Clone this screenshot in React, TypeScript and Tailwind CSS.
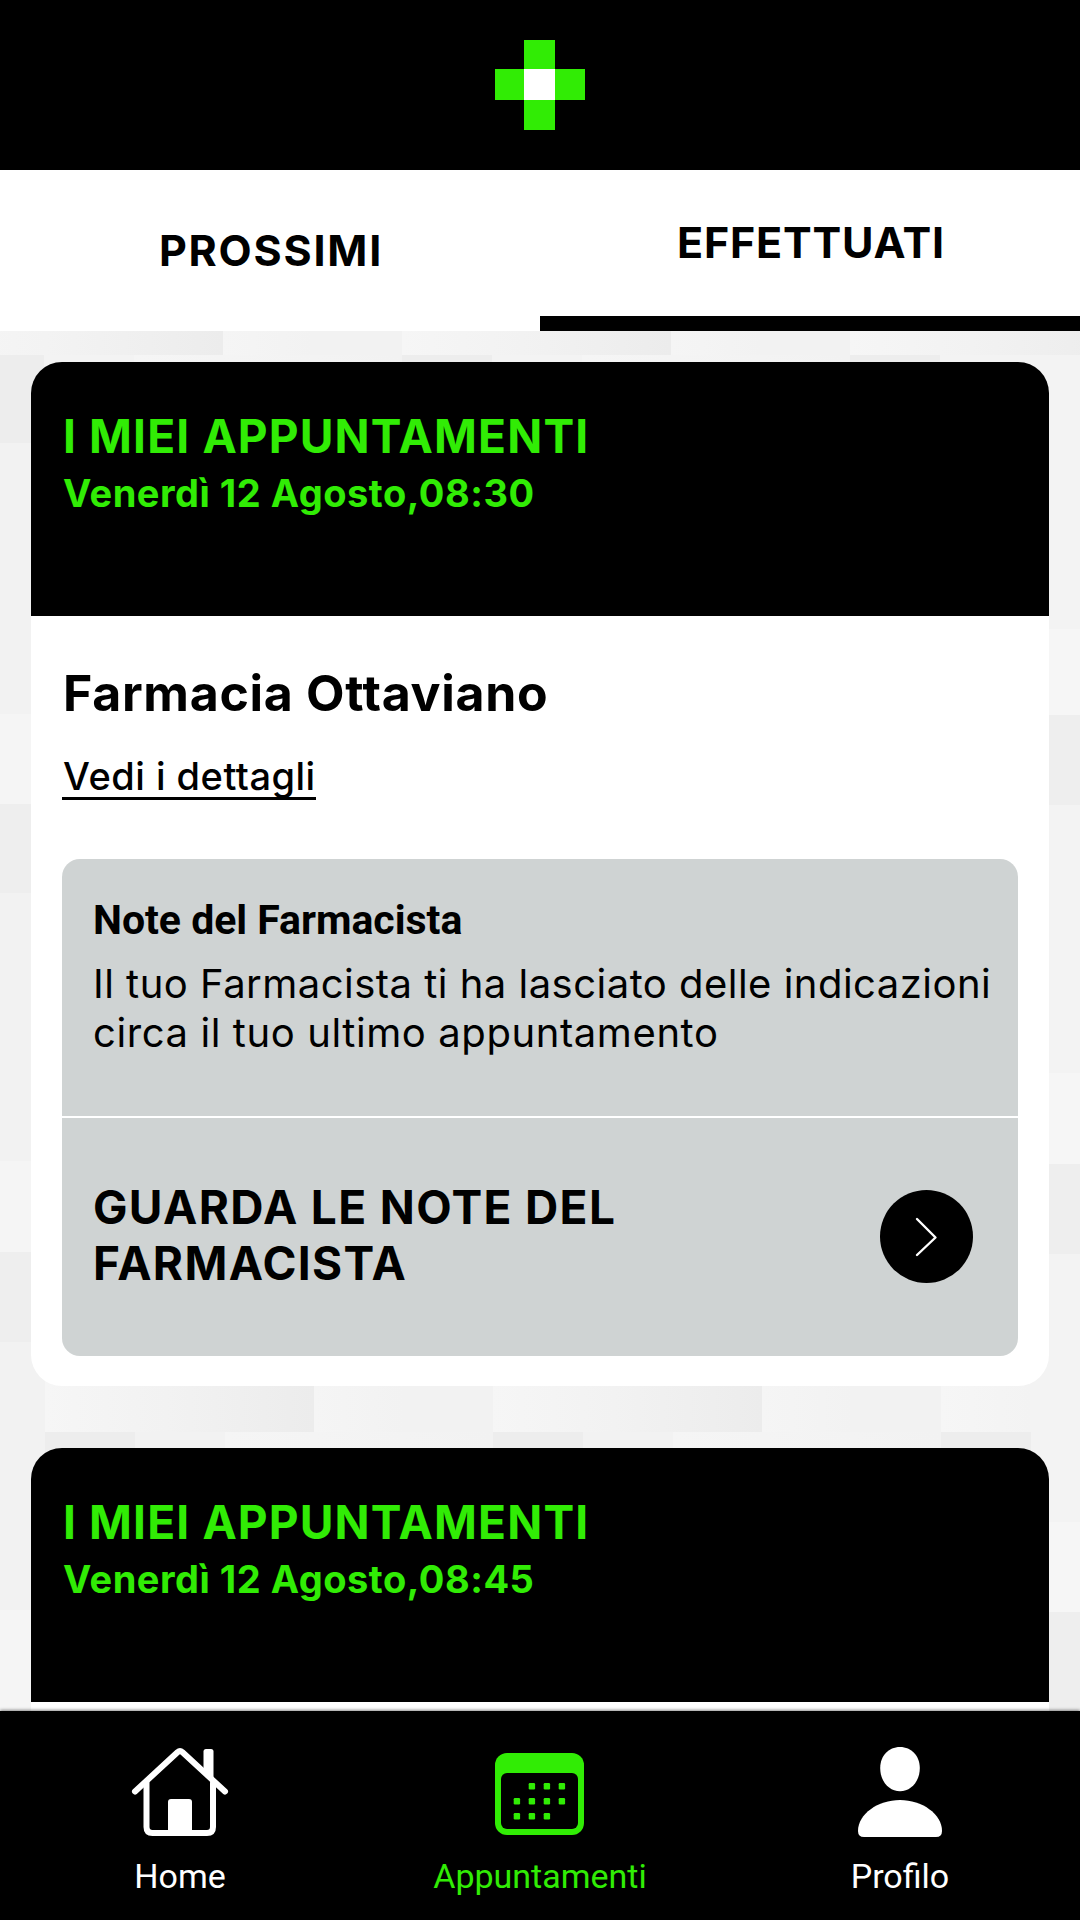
type Appointment = { date: string; pharmacy?: string };

const appointments: Appointment[] = [
  { date: "Venerdì 12 Agosto,08:30", pharmacy: "Farmacia Ottaviano" },
  { date: "Venerdì 12 Agosto,08:45" },
];

function Logo() {
  return (
    <svg width="90" height="90" viewBox="0 0 90 90" shapeRendering="crispEdges">
      <path d="M29 0h31v90H29zM0 29h90v31H0z" fill="#31ec05" />
      <path d="M29 29h31v31H29z" fill="#fff" />
    </svg>
  );
}

function Mosaic() {
  return (
    <svg className="absolute inset-0 h-full w-full" aria-hidden="true">
      <defs>
        <linearGradient id="fade">
          <stop offset="0" stopColor="#f6f6f6" />
          <stop offset="0.45" stopColor="#f2f2f2" />
          <stop offset="1" stopColor="#ececec" />
        </linearGradient>
        <linearGradient id="soft">
          <stop offset="0" stopColor="#f5f5f5" />
          <stop offset="1" stopColor="#f2f2f2" />
        </linearGradient>
      </defs>
      {[-46, 402, 850].map((x) => (
        <g key={x}>
          <rect x={x} y="0" width="269" height="24" fill="url(#fade)" />
          <rect x={x + 269} y="0" width="90" height="24" fill="url(#soft)" />
          <rect x={x + 359} y="0" width="89" height="24" fill="#f2f2f2" />
          <rect x={x} y="24" width="90" height="88" fill="#ededed" />
          <rect x={x + 90} y="24" width="90" height="88" fill="#f3f3f3" />
          <rect x={x + 180} y="24" width="268" height="88" fill="url(#soft)" />
        </g>
      ))}
      <rect x="0" y="112" width="31" height="271" fill="#f2f2f2" />
      <rect x="0" y="383" width="31" height="90" fill="#f5f5f5" />
      <rect x="0" y="473" width="31" height="89" fill="#eeeeee" />
      <rect x="0" y="562" width="31" height="268" fill="#f2f2f2" />
      <rect x="0" y="830" width="31" height="91" fill="#f5f5f5" />
      <rect x="0" y="921" width="31" height="90" fill="#eeeeee" />
      <rect x="0" y="1011" width="60" height="268" fill="#f2f2f2" />
      <rect x="0" y="1279" width="31" height="101" fill="#f5f5f5" />
      <rect x="1000" y="24" width="80" height="274" fill="#f3f3f3" />
      <rect x="1000" y="298" width="80" height="86" fill="#f6f6f6" />
      <rect x="1000" y="384" width="80" height="90" fill="#eeeeee" />
      <rect x="1000" y="474" width="80" height="268" fill="#f3f3f3" />
      <rect x="1000" y="742" width="80" height="91" fill="#f6f6f6" />
      <rect x="1000" y="833" width="80" height="90" fill="#eeeeee" />
      <rect x="1000" y="923" width="80" height="268" fill="#f3f3f3" />
      <rect x="1000" y="1191" width="80" height="90" fill="#f6f6f6" />
      <rect x="1000" y="1281" width="80" height="99" fill="#eeeeee" />
      {[45, 493, 941].map((x) => (
        <g key={x}>
          <rect x={x} y="1011" width="269" height="90" fill="url(#fade)" />
          <rect x={x + 269} y="1011" width="90" height="90" fill="url(#soft)" />
          <rect x={x + 359} y="1011" width="89" height="90" fill="#f2f2f2" />
          <rect x={x} y="1101" width="90" height="30" fill="#ededed" />
          <rect x={x + 90} y="1101" width="90" height="30" fill="#f2f2f2" />
          <rect x={x + 180} y="1101" width="268" height="30" fill="url(#soft)" />
        </g>
      ))}
      <rect x="1031" y="923" width="49" height="268" fill="#f3f3f3" />
    </svg>
  );
}

function AppointmentCard({ date, pharmacy }: Appointment) {
  return (
    <article className="shrink-0 overflow-hidden rounded-[31px] bg-white">
      <header className="h-[254px] bg-black px-8 pt-[47px] font-bold text-[#31ec05]">
        <h2 className="text-[46px] leading-[55px] tracking-[1.15px]">I MIEI APPUNTAMENTI</h2>
        <p className="text-[38px] leading-[59px] tracking-[0.51px]">{date}</p>
      </header>
      {pharmacy ? (
        <div className="flex flex-col items-start px-[31px] pt-[47px] pb-[30px]">
          <h3 className="pl-px text-[50px] leading-[60px] font-bold tracking-[0.69px]">{pharmacy}</h3>
          <a className="mt-[33px] border-b-3 border-black pl-px text-[38px] leading-[41px] font-medium tracking-[0.5px]">
            Vedi i dettagli
          </a>
          <section className="mt-[59px] w-full overflow-hidden rounded-[18px] bg-[#cfd3d3]">
            <div className="h-[259px] border-b-2 border-white pt-9 pl-[31px]">
              <h4 className="font-[Roboto,sans-serif] text-[41px] leading-[50px] font-bold tracking-[-0.03px]">Note del Farmacista</h4>
              <p className="mt-3.5 text-[40px] leading-[49px] tracking-[0.48px] whitespace-nowrap">
                Il tuo Farmacista ti ha lasciato delle indicazioni
                <br />
                <span className="tracking-[0.59px]">circa il tuo ultimo appuntamento</span>
              </p>
            </div>
            <button className="flex h-[238px] w-full items-center justify-between pr-[45px] pb-0.5 pl-[31px] text-left">
              <span className="mb-0.5 w-[600px] text-[46px] leading-[56px] font-bold tracking-[1.35px]">
                GUARDA LE NOTE DEL FARMACISTA
              </span>
              <span className="flex size-[93px] items-center justify-center rounded-full bg-black">
                <svg width="93" height="93" viewBox="0 0 93 93" fill="none" stroke="#fff" strokeWidth="2.4" strokeLinecap="round" strokeLinejoin="round">
                  <path d="M37 29L55.500 47.500L37 65" />
                </svg>
              </span>
            </button>
          </section>
        </div>
      ) : (
        <div className="h-[771px]" />
      )}
    </article>
  );
}

function HomeIcon() {
  return (
    <svg width="100" height="90" viewBox="0 0 100 90" fill="none" stroke="#fff" strokeWidth="6" strokeLinecap="round" strokeLinejoin="round">
      <path d="M5 44.500L47.500 5.200Q50 3 52.500 5.200L95 44.500" />
      <path d="M16.500 36V80Q16.500 86 22.500 86H77Q83 86 83 80V36" />
      <path d="M73.500 22V4.500Q73.500 2 76 2H81Q83.500 2 83.500 4.500V31.500Z" fill="#fff" stroke="none" />
      <path d="M38 88V55Q38 52 41 52H59Q62 52 62 55V88Z" fill="#fff" stroke="none" />
    </svg>
  );
}

const calendarDots = [
  [34, 30], [49, 30], [64, 30],
  [19, 45], [34, 45], [49, 45], [64, 45],
  [19, 60], [34, 60], [49, 60],
];

function CalendarIcon() {
  return (
    <svg className="mr-px mb-0.5" width="89" height="82" viewBox="0 0 89 82">
      <rect width="89" height="82" rx="12" fill="#31ec05" />
      <rect x="6" y="20" width="77" height="56" rx="6" fill="#000" />
      {calendarDots.map(([x, y]) => (
        <rect key={`${x}-${y}`} x={x - 0.3} y={y} width="6.400" height="6.400" rx="1.200" fill="#31ec05" />
      ))}
    </svg>
  );
}

function ProfileIcon() {
  return (
    <svg width="86" height="90" viewBox="0 0 86 90" fill="#fff">
      <path d="M43 0C54.500 0 62.800 9 62.800 21C62.800 34.500 54 44.200 43 44.200S23.200 34.500 23.200 21C23.200 9 31.500 0 43 0Z" />
      <path d="M43 53C65 53 85 67 85 84Q85 90 79 90H7Q1 90 1 84C1 67 21 53 43 53Z" />
    </svg>
  );
}

const navItems = [
  { label: "Home", icon: HomeIcon, color: "text-white" },
  { label: "Appuntamenti", icon: CalendarIcon, color: "text-[#31ec05]" },
  { label: "Profilo", icon: ProfileIcon, color: "text-white" },
];

export default function App() {
  return (
    <div className="flex h-[1920px] w-[1080px] flex-col overflow-hidden bg-[#f3f3f3] font-[Inter,sans-serif] text-black">
      <header className="flex h-[170px] shrink-0 items-center justify-center bg-black">
        <Logo />
      </header>
      <nav className="grid h-[161px] shrink-0 grid-cols-2 bg-white text-[43px] font-bold">
        <button className="flex items-center justify-center pl-0.5 tracking-[1.8px]">PROSSIMI</button>
        <button className="flex items-center justify-center border-b-[15px] border-black pb-0.5 pl-0.5 tracking-[0.8px]">EFFETTUATI</button>
      </nav>
      <main className="relative min-h-0 flex-1 overflow-hidden">
        <Mosaic />
        <div className="relative flex flex-col gap-[62px] px-[31px] pt-[31px]">
          {appointments.map((a) => (
            <AppointmentCard key={a.date} {...a} />
          ))}
        </div>
      </main>
      <nav className="relative grid h-[209px] shrink-0 grid-cols-3 bg-black font-[Roboto,sans-serif] text-[34px] leading-10 shadow-[0_-1px_3px_rgba(0,0,0,0.45)]">
        {navItems.map(({ label, icon: Icon, color }) => (
          <a key={label} className={`flex flex-col items-center ${color}`}>
            <span className="flex h-[126px] items-end justify-center">
              <Icon />
            </span>
            <span className="mt-[19px]">{label}</span>
          </a>
        ))}
      </nav>
    </div>
  );
}
